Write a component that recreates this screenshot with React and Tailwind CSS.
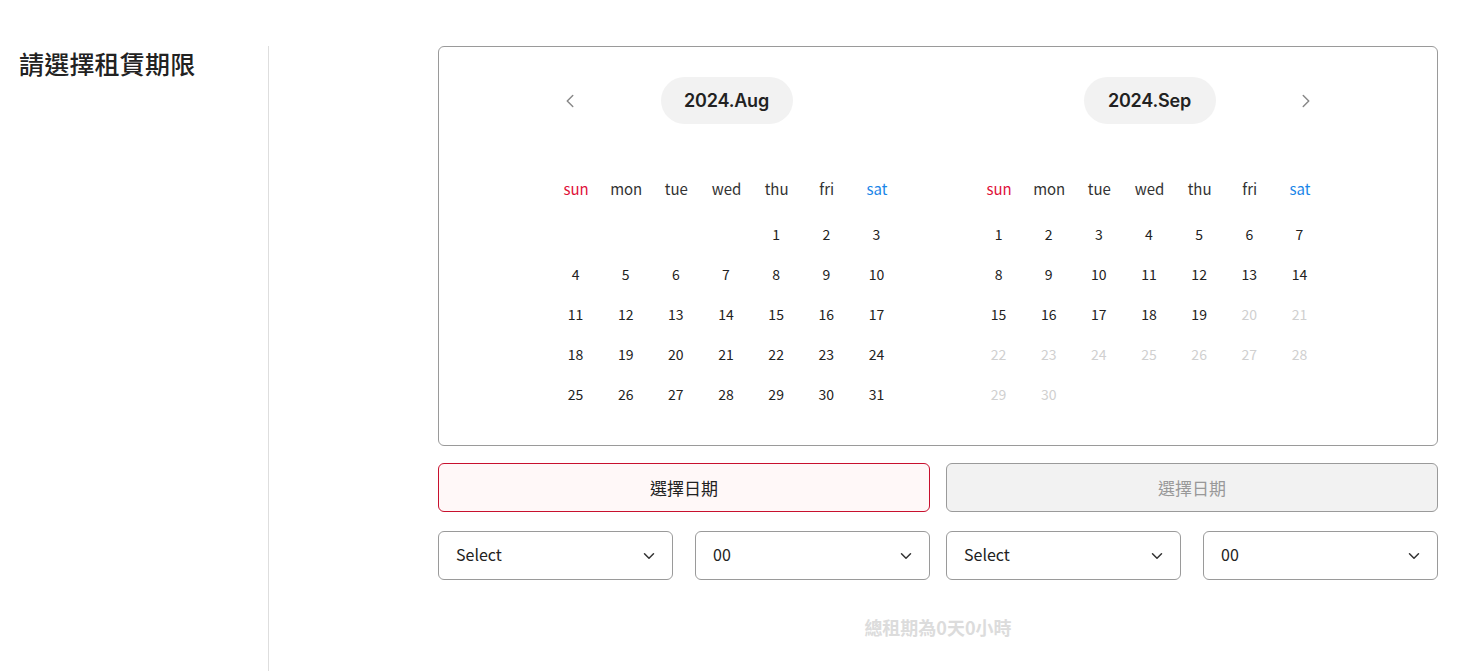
import React from "react";
import { ChevronLeft, ChevronRight, ChevronDown } from "lucide-react";

const CJK = { fontFamily: '"Noto Sans CJK TC", "Noto Sans", sans-serif' };
const HEAD = { fontFamily: 'Inter, "Noto Sans", sans-serif' };

const weekdays = ["sun", "mon", "tue", "wed", "thu", "fri", "sat"];

function Month({ title, offset, days, disabledFrom, side }) {
  const cells = [];
  for (let i = 0; i < offset; i++) cells.push(null);
  for (let d = 1; d <= days; d++) cells.push(d);
  while (cells.length % 7 !== 0) cells.push(null);
  return (
    <div className="w-[351px]">
      <div className="relative h-[47px] flex justify-center">
        {side === "left" && (
          <button className="absolute left-[8px] top-[13px] text-[#888]">
            <ChevronLeft size={22} strokeWidth={1.6} />
          </button>
        )}
        <div
          className="w-[132px] h-[47px] rounded-full bg-[#f2f2f2] flex items-center justify-center text-[18px] font-semibold text-[#222] tracking-[-0.2px]"
          style={HEAD}
        >
          {title}
        </div>
        {side === "right" && (
          <button className="absolute right-[8px] top-[13px] text-[#888]">
            <ChevronRight size={22} strokeWidth={1.6} />
          </button>
        )}
      </div>
      <div className="mt-[45px] grid grid-cols-7 h-[40px] items-center text-[15px] text-[#333]" style={CJK}>
        {weekdays.map((w) => (
          <div
            key={w}
            className={
              "text-center " +
              (w === "sun" ? "text-[#e0103a]" : w === "sat" ? "text-[#1a86e8]" : "")
            }
          >
            {w}
          </div>
        ))}
      </div>
      <div className="mt-[5px] grid grid-cols-7 text-[14px]" style={CJK}>
        {cells.map((d, i) => (
          <div
            key={i}
            className={
              "h-[40px] flex items-center justify-center pr-[1px] " +
              (d && disabledFrom && d >= disabledFrom ? "text-[#d0d0d0]" : "text-[#222]")
            }
          >
            {d || ""}
          </div>
        ))}
      </div>
    </div>
  );
}

function SelectBox({ label }) {
  return (
    <div className="h-[49px] rounded-[6px] border border-[#9a9a9a] bg-white flex items-center justify-between pl-[17px] pr-[14px] text-[16px] text-[#222]" style={CJK}>
      <span className="pb-[3px]">{label}</span>
      <ChevronDown size={18} strokeWidth={2} className="text-[#333]" />
    </div>
  );
}

export default function App() {
  return (
    <div className="w-[1469px] h-[671px] bg-white flex pt-[46px] overflow-hidden" style={CJK}>
      <div className="w-[269px] shrink-0 border-r border-[#dedede] pl-[19px]">
        <h2 className="text-[25px] leading-[34px] font-medium text-[#222] tracking-[0.2px]">請選擇租賃期限</h2>
      </div>
      <div className="flex-1 pl-[169px] pr-[31px]">
        <div className="w-[1000px]">
          <div className="h-[400px] rounded-[6px] border border-[#9a9a9a] pt-[30px] flex justify-center gap-[72px]">
            <Month title="2024.Aug" offset={4} days={31} side="left" />
            <Month title="2024.Sep" offset={0} days={30} disabledFrom={20} side="right" />
          </div>
          <div className="mt-[17px] grid grid-cols-2 gap-[16px]">
            <button className="h-[49px] rounded-[6px] border border-[#c8102e] bg-[#fff8f8] text-[17px] text-[#222]" style={CJK}>
              選擇日期
            </button>
            <button className="h-[49px] rounded-[6px] border border-[#9a9a9a] bg-[#f2f2f2] text-[17px] text-[#999]" style={CJK}>
              選擇日期
            </button>
          </div>
          <div className="mt-[19px] grid grid-cols-2 gap-[16px]">
            <div className="grid grid-cols-2 gap-[22px]">
              <SelectBox label="Select" />
              <SelectBox label="00" />
            </div>
            <div className="grid grid-cols-2 gap-[22px]">
              <SelectBox label="Select" />
              <SelectBox label="00" />
            </div>
          </div>
          <div className="mt-[35px] text-center text-[18px] leading-[24px] font-bold text-[#dcdcdc]" style={CJK}>
            總租期為0天0小時
          </div>
        </div>
      </div>
    </div>
  );
}
